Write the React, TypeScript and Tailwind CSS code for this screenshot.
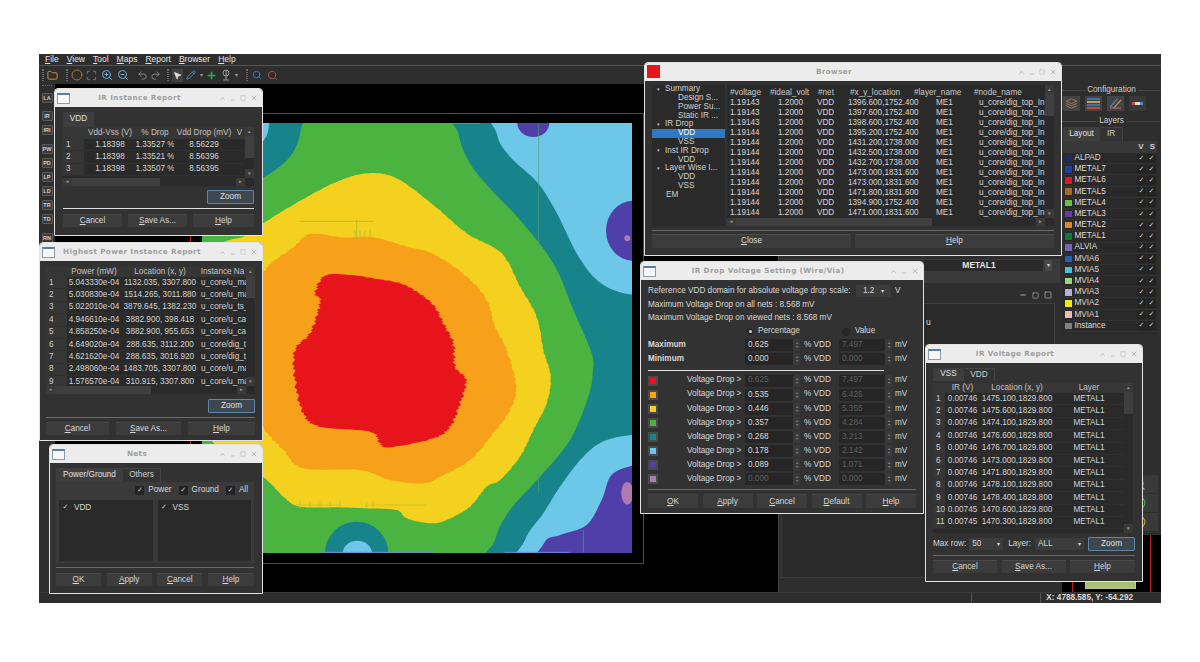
import {
  Folder,
  Circle,
  Scan,
  ZoomIn,
  ZoomOut,
  Undo2,
  Redo2,
  MousePointer2,
  Pencil,
  Plus,
  Search,
  ChevronUp,
  Minus,
  Square,
  X,
} from 'lucide-react';
import type { ReactNode } from 'react';

// rounded, optionally jagged outline through hand-picked points
function blob(pts: number[][], jitter = 0) {
  const out: string[] = [];
  const n = pts.length;
  let k = 0;
  for (let i = 0; i < n; i++) {
    const [p0, p1, p2, p3] = [pts[(i - 1 + n) % n], pts[i], pts[(i + 1) % n], pts[(i + 2) % n]];
    const steps = jitter ? 14 : 8;
    for (let s = 0; s < steps; s++) {
      const t = s / steps;
      const f = (a: number, b: number, c: number, d: number) =>
        0.5 * (2 * b + (c - a) * t + (2 * a - 5 * b + 4 * c - d) * t * t + (3 * b - a - 3 * c + d) * t * t * t);
      k++;
      const x = f(p0[0], p1[0], p2[0], p3[0]) + (jitter ? (((k * 7) % 5) - 2) * jitter : 0);
      const y = f(p0[1], p1[1], p2[1], p3[1]);
      out.push(`${x.toFixed(1)},${y.toFixed(1)}`);
    }
  }
  return out.join(' ');
}

const tealLeft = [[-60, -40], [300, -40], [302, 60], [270, 140], [188, 205], [60, 280], [-80, 300]];
const blueLeft = [[-60, -40], [212, -40], [208, 40], [188, 95], [100, 170], [-60, 180]];
const tealRight = [[768, -60], [775, 70], [810, 160], [870, 235], [960, 330], [1060, 460], [1120, 600], [1175, 730], [1178, 790], [1165, 860], [1110, 990], [1020, 1100], [930, 1200], [885, 1290], [870, 1420], [1500, 1500], [1500, -60]];
const blueTop = [[885, -60], [890, 70], [930, 140], [1010, 215], [1060, 290], [1100, 370], [1130, 430], [1180, 500], [1240, 540], [1320, 556], [1480, 560], [1480, -60]];
const blueBottom = [[1340, 970], [1220, 990], [1150, 1040], [1080, 1130], [1030, 1210], [975, 1290], [950, 1420], [1450, 1450], [1450, 970]];
const purpleBottom = [[1340, 1060], [1240, 1090], [1205, 1170], [1160, 1245], [1080, 1275], [1032, 1300], [1010, 1420], [1450, 1450], [1450, 1060]];
const yellow = [[500, 190], [590, 205], [700, 285], [800, 370], [905, 430], [960, 530], [1010, 620], [1030, 720], [1052, 800], [1040, 880], [1000, 960], [960, 1040], [900, 1110], [860, 1130], [810, 1190], [740, 1230], [690, 1240], [620, 1225], [590, 1200], [500, 1195], [420, 1192], [300, 1190], [250, 1160], [188, 1100], [40, 1000], [-60, 700], [40, 430], [135, 378], [190, 340], [270, 290], [400, 220]];
const orange = [[330, 372], [430, 382], [520, 382], [620, 410], [700, 432], [800, 500], [860, 570], [885, 650], [920, 720], [948, 830], [930, 900], [880, 970], [810, 1050], [720, 1100], [670, 1120], [570, 1110], [480, 1080], [310, 1075], [250, 1020], [188, 950], [100, 800], [100, 600], [188, 490], [215, 458], [280, 412]];
const red = [[375, 497], [450, 495], [520, 505], [600, 520], [650, 545], [700, 585], [730, 640], [760, 700], [765, 770], [798, 810], [780, 880], [750, 950], [700, 985], [570, 1012], [540, 1000], [510, 965], [360, 950], [310, 910], [285, 810], [285, 720], [330, 670], [355, 600], [360, 565], [345, 550]];

function HeatMap() {
  return (
    <svg viewBox="6 39 1290 1290" className="absolute left-[147px] top-[39px] h-[430px] w-[430px]">
      <rect x="6" y="39" width="1290" height="1290" fill="#4bb340" />
      <polygon points={blob(tealLeft)} fill="#17838a" />
      <polygon points={blob(blueLeft)} fill="#6cc7e8" />
      <polygon points={blob(tealRight)} fill="#17838a" />
      <polygon points={blob(blueTop)} fill="#6cc7e8" />
      <polygon points={blob(blueBottom)} fill="#6cc7e8" />
      <polygon points={blob(purpleBottom)} fill="#503fa8" />
      <ellipse cx="1300" cy="362" rx="82" ry="90" fill="#503fa8" />
      <ellipse cx="1000" cy="39" rx="48" ry="42" fill="#503fa8" />
      <circle cx="1282" cy="385" r="9" fill="#b07ab0" />
      <ellipse cx="1282" cy="1150" rx="18" ry="34" fill="#b07ab0" />
      <ellipse cx="470" cy="1330" rx="95" ry="95" fill="#17838a" />
      <ellipse cx="472" cy="1330" rx="44" ry="38" fill="#6cc7e8" />
      <polygon points={blob(yellow, 0.6)} fill="#f4d01f" />
      <polygon points={blob(orange, 1.5)} fill="#f7a01a" />
      <polygon points={blob(red, 2.6)} fill="#e8141b" />
      <path d="M1016 39V420M1016 1080V1150M1150 1260V1329" stroke="#4f9f72" strokeWidth="2" />
      <path d="M300 334H520M470 330V385M465 360V385M480 360V380M495 360V380M510 360V380" stroke="#7fae3a" strokeWidth="1.5" />
      <path d="M290 1185H420M495 1185H680M300 1170V1195M330 1175V1195M360 1175V1195M390 1175V1195M420 1170V1195M500 1175V1195M520 1175V1195" stroke="#b9bf2e" strokeWidth="2" />
      <path d="M710 40H840M360 1327H700M915 1327H1110" stroke="#6f8bd0" strokeWidth="3" />
    </svg>
  );
}

function WinControls({ noMax = false }: { noMax?: boolean }) {
  return (
    <div className="flex items-center gap-[4px] text-[#b0b0b0]">
      <ChevronUp size={7} strokeWidth={3} />
      <Minus size={6} strokeWidth={3} className="mt-[3px]" />
      {!noMax && <Square size={6} strokeWidth={2} />}
      <X size={8} strokeWidth={2.5} />
    </div>
  );
}

function Win({
  title,
  className,
  icon,
  noMax = false,
  children,
}: {
  title: string;
  className: string;
  icon?: ReactNode;
  noMax?: boolean;
  children: ReactNode;
}) {
  return (
    <div className={`absolute flex flex-col rounded-t-[4px] border border-[#e3e3e3] bg-[#323232] text-[#d6d6d6] ${className}`}>
      <div className="relative flex h-[18px] shrink-0 items-center justify-between rounded-t-[3px] bg-[#ececec] pl-[2px] pr-[4px]">
        {icon ?? <div className="h-[11px] w-[13px] border border-t-[2px] border-[#8d9aa8] border-t-[#5a7ca5] bg-[#f8f8f8]" />}
        <div
          className={`absolute left-0 text-center font-['DejaVu_Sans',sans-serif] text-[7.2px] font-bold tracking-[0.4px] text-[#a0a0a0] ${
            noMax ? 'right-[28px]' : 'right-[38px]'
          }`}
        >
          {title}
        </div>
        <WinControls noMax={noMax} />
      </div>
      {children}
    </div>
  );
}

function Btn({ letter, rest, className = '' }: { letter: string; rest: string; className?: string }) {
  return (
    <div className={`flex h-[13px] items-center justify-center rounded-[1px] border-t border-[#4a4a4a] bg-[#3c3c3c] text-[8.2px] text-[#d8d8d8] ${className}`}>
      <u>{letter}</u>
      {rest}
    </div>
  );
}

function ZoomBtn({ className = '' }: { className?: string }) {
  return (
    <div className={`flex h-[14px] w-[47px] items-center justify-center rounded-[1px] border border-[#5d86a8] bg-[#3d4750] text-[8.2px] text-[#e0e0e0] ${className}`}>
      Zoom
    </div>
  );
}

function Tab({ label, active = false, className = '' }: { label: string; active?: boolean; className?: string }) {
  return (
    <div
      className={`flex items-center justify-center rounded-t-[2px] text-[8.2px] ${
        active ? 'bg-[#3e3e3e] text-[#e0e0e0]' : 'border-t border-r border-[#444444] bg-[#333333] text-[#cfcfcf]'
      } ${className}`}
    >
      {label}
    </div>
  );
}

function VScroll() {
  return (
    <div className="flex w-[9px] shrink-0 flex-col items-center bg-[#2a2a2a] text-[#9a9a9a]">
      <div className="flex h-[9px] w-full items-center justify-center bg-[#3a3a3a] text-[5px] leading-none">▴</div>
      <div className="h-[22px] w-full bg-[#3f3f3f]" />
      <div className="flex-1" />
      <div className="flex h-[9px] w-full items-center justify-center bg-[#3a3a3a] text-[5px] leading-none">▾</div>
    </div>
  );
}

function HScroll({ thumb }: { thumb: string }) {
  return (
    <div className="flex h-[8px] shrink-0 items-center bg-[#2a2a2a] text-[#9a9a9a]">
      <div className="flex h-full w-[9px] items-center justify-center bg-[#3a3a3a] text-[5px]">◂</div>
      <div className={`h-full bg-[#3f3f3f] ${thumb}`} />
      <div className="flex-1" />
      <div className="flex h-full w-[9px] items-center justify-center bg-[#3a3a3a] text-[5px]">▸</div>
      <div className="w-[9px]" />
    </div>
  );
}

function ReportTable({
  cols,
  head,
  rows,
  rowH,
  headH,
  className,
  scroll = true,
  leftLast = false,
}: {
  cols: string;
  head: string[];
  rows: string[][];
  rowH: string;
  headH: string;
  className: string;
  scroll?: boolean;
  leftLast?: boolean;
}) {
  return (
    <div className={`flex flex-col bg-[#2a2a2a] ${className}`}>
      <div className="flex min-h-0 flex-1">
        <div className="min-w-0 flex-1 overflow-hidden text-[8.2px]">
          <div className={`grid ${cols} ${headH} bg-[#363636]`}>
            <div />
            {head.map((h) => (
              <div key={h} className="flex items-center justify-center overflow-hidden whitespace-nowrap text-[#c4c4c4]">
                {h}
              </div>
            ))}
          </div>
          {rows.map((r) => (
            <div key={r[0]} className={`grid ${cols} ${rowH} border-b border-[#303030]`}>
              <div className="flex items-center overflow-hidden bg-[#363636] pl-[3px] text-[#cfcfcf]">{r[0]}</div>
              {r.slice(1).map((c, i) => (
                <div
                  key={i}
                  className={`flex items-center overflow-hidden whitespace-nowrap text-[#d4d4d4] ${
                    leftLast && i === r.length - 2 ? 'justify-start pl-[2px]' : 'justify-center'
                  }`}
                >
                  {c}
                </div>
              ))}
            </div>
          ))}
        </div>
        <VScroll />
      </div>
      {scroll && <HScroll thumb="w-[46%]" />}
    </div>
  );
}

const instanceRows = [
  ['1', '1.18398', '1.33527 %', '8.56229', ''],
  ['2', '1.18398', '1.33521 %', '8.56396', ''],
  ['3', '1.18398', '1.33507 %', '8.56395', ''],
];

const powerRows = [
  ['1', '5.043330e-04', '1132.035, 3307.800', 'u_core/u_ma'],
  ['2', '5.030830e-04', '1514.265, 3011.880', 'u_core/u_ma'],
  ['3', '5.022010e-04', '3879.645, 1382.230', 'u_core/u_ts_'],
  ['4', '4.946610e-04', '3882.900, 398.418', 'u_core/u_ca'],
  ['5', '4.858250e-04', '3882.900, 955.653', 'u_core/u_ca'],
  ['6', '4.649020e-04', '288.635, 3112.200', 'u_core/dig_t'],
  ['7', '4.621620e-04', '288.635, 3016.920', 'u_core/dig_t'],
  ['8', '2.498060e-04', '1483.705, 3307.800', 'u_core/u_ma'],
  ['9', '1.576570e-04', '310.915, 3307.800', 'u_core/u_ma'],
];

const voltageRows = [
  ['1', '0.00746', '1475.100,1829.800', 'METAL1'],
  ['2', '0.00746', '1475.600,1829.800', 'METAL1'],
  ['3', '0.00746', '1474.100,1829.800', 'METAL1'],
  ['4', '0.00746', '1476.600,1829.800', 'METAL1'],
  ['5', '0.00746', '1476.700,1829.800', 'METAL1'],
  ['6', '0.00746', '1473.000,1829.800', 'METAL1'],
  ['7', '0.00746', '1471.800,1829.800', 'METAL1'],
  ['8', '0.00746', '1478.100,1829.800', 'METAL1'],
  ['9', '0.00746', '1478.400,1829.800', 'METAL1'],
  ['10', '0.00745', '1470.600,1829.800', 'METAL1'],
  ['11', '0.00745', '1470.300,1829.800', 'METAL1'],
];

const browserRows = [
  ['1.19143', '1396.600,1752.400'],
  ['1.19143', '1397.600,1752.400'],
  ['1.19143', '1398.600,1752.400'],
  ['1.19144', '1395.200,1752.400'],
  ['1.19144', '1431.200,1738.000'],
  ['1.19144', '1432.500,1738.000'],
  ['1.19144', '1432.700,1738.000'],
  ['1.19144', '1473.000,1831.600'],
  ['1.19144', '1473.000,1831.600'],
  ['1.19144', '1471.800,1831.600'],
  ['1.19144', '1394.900,1752.400'],
  ['1.19144', '1471.000,1831.600'],
];

const treeItems: [string, number, boolean?][] = [
  ['Summary', 0],
  ['Design S...', 1],
  ['Power Su...', 1],
  ['Static IR ...', 1],
  ['IR Drop', 0],
  ['VDD', 1, true],
  ['VSS', 1],
  ['Inst IR Drop', 0],
  ['VDD', 1],
  ['Layer Wise I...', 0],
  ['VDD', 1],
  ['VSS', 1],
  ['EM', 2],
];

const dropRows = [
  ['bg-[#e8141b]', '0.625', '7.497'],
  ['bg-[#f7a01a]', '0.535', '6.426'],
  ['bg-[#f4d01f]', '0.446', '5.355'],
  ['bg-[#4bb340]', '0.357', '4.284'],
  ['bg-[#17838a]', '0.268', '3.213'],
  ['bg-[#6cc7e8]', '0.178', '2.142'],
  ['bg-[#503fa8]', '0.089', '1.071'],
  ['bg-[#b07ab0]', '0.000', '0.000'],
];

const layers = [
  ['ALPAD', 'bg-[#1d2a6b]'],
  ['METAL7', 'bg-[#1c3f9a]'],
  ['METAL6', 'bg-[#e8141b]'],
  ['METAL5', 'bg-[#a7692a]'],
  ['METAL4', 'bg-[#6cc23a]'],
  ['METAL3', 'bg-[#6a3aa0]'],
  ['METAL2', 'bg-[#d68a2e]'],
  ['METAL1', 'bg-[#0e7a35]'],
  ['ALVIA', 'bg-[#7b65b5]'],
  ['MVIA6', 'bg-[#2a5fb0]'],
  ['MVIA5', 'bg-[#45c0dc]'],
  ['MVIA4', 'bg-[#9bd67d]'],
  ['MVIA3', 'bg-[#b8aed8]'],
  ['MVIA2', 'bg-[#f4e61f]'],
  ['MVIA1', 'bg-[#f4b8b8]'],
  ['Instance', 'bg-[#808080]'],
];

function Spin({ value, off = false, w }: { value: string; off?: boolean; w: string }) {
  return (
    <div className={`flex h-[12px] items-center bg-[#262626] pl-[3px] text-[8.2px] ${w} ${off ? 'text-[#5f5f5f]' : 'text-[#dcdcdc]'}`}>
      <span className="flex-1">{value}</span>
      <span className="flex h-full w-[7px] flex-col items-center justify-center bg-[#3a3a3a] text-[4px] leading-[4px] text-[#8a8a8a]">
        <span>▴</span>
        <span>▾</span>
      </span>
    </div>
  );
}

function Grip({ className = '' }: { className?: string }) {
  return <div className={`h-[12px] w-[2px] border-x border-dotted border-[#6a6a6a] ${className}`} />;
}

function Check({ className = '' }: { className?: string }) {
  return (
    <span className={`flex h-[9px] w-[9px] items-center justify-center bg-[#232323] font-['DejaVu_Sans',sans-serif] text-[7px] leading-none text-[#cfcfcf] ${className}`}>
      ✓
    </span>
  );
}

const strip = [
  ['LA', 'mt-[6px]'],
  ['IR', 'mt-[8px]'],
  ['IRI', 'mt-[4px]'],
  ['PW', 'mt-[9px]'],
  ['PD', 'mt-[4px]'],
  ['LP', 'mt-[4px]'],
  ['LD', 'mt-[4px]'],
  ['TR', 'mt-[4px]'],
  ['TD', 'mt-[4px]'],
  ['RN', 'mt-[9px]'],
];

export default function App() {
  return (
    <div className="relative h-[662px] w-[1200px] overflow-hidden bg-white font-['Liberation_Sans',Arial,sans-serif]">
      {/* main application window */}
      <div className="ml-[39px] flex h-[549px] w-[1122px] translate-y-[54px] flex-col bg-[#2e2e2e] text-[#d8d8d8]">
        <div className="flex h-[12px] shrink-0 items-center gap-[8px] border-b border-[#555555] pl-[6px] text-[8.5px] text-[#e4e4e4]">
          {['File', 'View', 'Tool', 'Maps', 'Report', 'Browser', 'Help'].map((m) => (
            <span key={m}>
              <u>{m[0]}</u>
              {m.slice(1)}
            </span>
          ))}
        </div>
        <div className="flex h-[18px] shrink-0 items-center pl-[3px]">
          <Grip />
          <Folder size={11} className="ml-[3px] text-[#d99a3a]" />
          <Grip className="ml-[8px]" />
          <Circle size={12} className="ml-[3px] text-[#a8762c]" />
          <Scan size={11} className="ml-[3px] text-[#5c9fc9]" />
          <ZoomIn size={12} className="ml-[4px] text-[#6fb0d8]" />
          <ZoomOut size={12} className="ml-[4px] text-[#6fb0d8]" />
          <Undo2 size={11} className="ml-[8px] text-[#8a8a8a]" />
          <Redo2 size={11} className="ml-[2px] text-[#8a8a8a]" />
          <Grip className="ml-[6px]" />
          <div className="ml-[3px] flex h-[13px] w-[11px] items-center justify-center bg-[#404040]">
            <MousePointer2 size={9} className="fill-[#dddddd] text-[#dddddd]" />
          </div>
          <Pencil size={10} className="ml-[3px] text-[#4a9ad4]" />
          <span className="ml-[4px] text-[6px] text-[#9a9a9a]">▾</span>
          <Plus size={11} strokeWidth={3.5} className="ml-[3px] text-[#2ba84a]" />
          <svg viewBox="0 0 12 12" className="ml-[3px] h-[12px] w-[12px] text-[#9a9a9a]" fill="none" stroke="currentColor">
            <circle cx="6" cy="4" r="3" />
            <path d="M6 1V11M3 11H9" />
          </svg>
          <span className="ml-[3px] text-[6px] text-[#9a9a9a]">▾</span>
          <Grip className="ml-[8px]" />
          <Search size={10} className="ml-[4px] text-[#3f86c4]" />
          <Search size={11} className="ml-[5px] text-[#c24a4a]" />
        </div>

        <div className="flex min-h-0 flex-1">
          <div className="flex w-[16px] shrink-0 flex-col items-center pt-[1px]">
            <div className="h-[2px] w-[10px] border-t border-dotted border-[#6a6a6a]" />
            {strip.map(([l, m]) => (
              <div key={l} className={`flex h-[10px] w-[11px] items-center justify-center rounded-[1px] border border-[#5a5a5a] bg-[#3a3a3a] text-[5.5px] font-bold text-[#cfcfcf] ${m}`}>
                {l}
              </div>
            ))}
          </div>

          <div className="relative w-[723px] shrink-0 overflow-hidden bg-black">
            {/* die outline */}
            <svg viewBox="0 0 723 508" className="absolute inset-0 h-[508px] w-[723px]" fill="none">
              <rect x="135.5" y="29.5" width="453" height="450" stroke="#c8141c" />
            </svg>
            <HeatMap />
          </div>

          {/* middle dock */}
          <div className="flex w-[282px] shrink-0 flex-col border-l border-[#444444]">
            <div className="h-[175px] shrink-0" />
            <div className="flex h-[24px] shrink-0 items-start justify-end gap-[2px] bg-[#3a3a3a] pr-[8px] pt-[1px]">
              <div className="flex h-[11px] flex-1 items-center justify-center bg-[#2a2a2a] pl-[136px] text-[8.5px] font-bold text-[#e4e4e4]">METAL1</div>
              <div className="flex h-[11px] w-[7px] items-center justify-center bg-[#4a4a4a] text-[6px]">▾</div>
            </div>
            <div className="flex h-[20px] shrink-0 items-center justify-end gap-[5px] pr-[8px] pt-[4px] text-[#bdbdbd]">
              <Minus size={8} strokeWidth={2.5} />
              <Square size={7} />
              <Square size={8} />
            </div>
            <div className="mb-[14px] ml-[2px] mr-[5px] flex-1 border border-[#3e3e3e] bg-[#2a2a2a] pl-[144px] pt-[12px] text-[8.5px] text-[#d8d8d8]">
              u
            </div>
          </div>

          {/* right dock */}
          <div className="flex min-w-0 flex-1 flex-col pl-[2px]">
            <div className="relative flex h-[12px] shrink-0 items-center justify-center text-[8.2px] text-[#cfcfcf]">
              <div className="absolute inset-x-0 top-[6px] h-px bg-[#444444]" />
              <span className="relative bg-[#2e2e2e] px-[2px]">Configuration</span>
            </div>
            <div className="flex h-[15px] shrink-0 gap-[5px] pl-[1px]">
              <div className="flex w-[17px] items-center justify-center bg-[#444444]">
                <svg viewBox="0 0 14 12" className="h-[11px] w-[13px]" fill="none" stroke="#b0706a">
                  <path d="M7 1L13 3.5L7 6L1 3.5ZM1 6L7 8.5L13 6M1 8.5L7 11L13 8.5" />
                </svg>
              </div>
              <div className="flex w-[17px] flex-col justify-center gap-[1px] bg-[#444444] px-[2px]">
                <div className="h-[2px] bg-[#3f6fb0]" />
                <div className="h-[2px] bg-[#d0a030]" />
                <div className="h-[2px] bg-[#3f6fb0]" />
                <div className="h-[2px] bg-[#c04a3a]" />
              </div>
              <div className="flex w-[17px] items-center justify-center bg-[#444444]">
                <svg viewBox="0 0 14 12" className="h-[11px] w-[13px]" fill="none" strokeWidth="1.3">
                  <path d="M1 10L9 1" stroke="#4a90c4" />
                  <path d="M5 11L13 2" stroke="#c9a14a" />
                  <path d="M1 11H13" stroke="#b05a6a" />
                </svg>
              </div>
              <div className="flex w-[17px] items-center justify-center bg-[#3a3a3a]">
                <div className="h-[3px] w-[3px] bg-[#c0504a]" />
                <div className="h-[3px] w-[5px] bg-[#dddddd]" />
                <div className="h-[3px] w-[3px] bg-[#5a8ac0]" />
              </div>
            </div>
            <div className="relative mt-[4px] flex h-[12px] shrink-0 items-center justify-center text-[8.2px] text-[#cfcfcf]">
              <div className="absolute inset-x-0 top-[6px] h-px bg-[#444444]" />
              <span className="relative bg-[#2e2e2e] px-[2px]">Layers</span>
            </div>
            <div className="flex h-[14px] shrink-0 pl-[1px]">
              <Tab label="Layout" active className="w-[37px]" />
              <Tab label="IR" className="w-[23px]" />
            </div>
            <div className="ml-[1px] mr-[4px] shrink-0 bg-[#2a2a2a] pb-[2px] text-[8.2px]">
              <div className="flex h-[12px] items-center justify-end gap-[6px] bg-[#383838] pr-[2px] text-[8px] font-bold text-[#cfcfcf]">
                <span>V</span>
                <span>S</span>
              </div>
              {layers.map(([name, swatch]) => (
                <div key={name} className="flex h-[11.2px] items-center border-b border-[#333333] pl-[2px] pr-[1px]">
                  <div className={`h-[6.5px] w-[6.5px] ${swatch}`} />
                  <span className="ml-[3px] flex-1 text-[#dcdcdc]">{name}</span>
                  <Check className="mr-[1px]" />
                  <Check />
                </div>
              ))}
            </div>
            <div className="min-h-0 flex-1" />
            <div className="flex shrink-0 flex-col items-end gap-[1px] pr-[3px]">
              <div className="flex h-[18px] w-[38px] items-center justify-center bg-[#3a3a3a]">
                <Search size={14} className="text-[#6fa8d8]" />
              </div>
              <div className="flex h-[18px] w-[38px] items-center justify-center bg-[#3a3a3a]">
                <Circle size={14} className="text-[#3fb04a]" />
              </div>
              <div className="flex h-[18px] w-[38px] items-center justify-center bg-[#3a3a3a]">
                <Circle size={14} className="text-[#d09a2a]" />
              </div>
            </div>
            <svg viewBox="0 0 99 57" className="mt-[4px] h-[57px] w-[99px] shrink-0 bg-black">
              <path d="M10.5 0V57M88.5 0V57" stroke="#c01a22" />
              <rect x="23.5" y="46.5" width="50" height="7" fill="#a8c070" stroke="#c8c0a0" />
            </svg>
          </div>
        </div>

        <div className="flex h-[11px] shrink-0 items-center justify-end border-t border-[#3a3a3a] pr-[28px] text-[8.2px] font-bold text-[#dcdcdc]">
          <div className="mr-[68px] h-full w-px bg-[#555555]" />
          <div className="mr-[5px] h-full w-px bg-[#555555]" />
          X: 4788.585, Y: -54.292
        </div>
      </div>

      {/* IR Instance Report */}
      <Win title="IR Instance Report" className="left-[54px] top-[88px] h-[148px] w-[209px]">
        <div className="flex flex-1 flex-col px-[8px] pt-[5px]">
          <Tab label="VDD" active className="h-[15px] w-[31px]" />
          <ReportTable
            className="h-[59px] w-[191px]"
            cols="grid-cols-[21px_52px_38px_60px_11px]"
            headH="h-[12px]"
            rowH="h-[12.4px]"
            head={['Vdd-Vss (V)', '% Drop', 'Vdd Drop (mV)', 'V']}
            rows={instanceRows}
          />
          <div className="mt-[4px] flex justify-end">
            <ZoomBtn />
          </div>
          <div className="mt-[4px] h-px bg-[#e0e0e0]" />
          <div className="mt-[5px] flex justify-between">
            <Btn letter="C" rest="ancel" className="w-[59px]" />
            <Btn letter="S" rest="ave As..." className="w-[59px]" />
            <Btn letter="H" rest="elp" className="w-[61px]" />
          </div>
        </div>
      </Win>

      {/* Highest Power Instance Report */}
      <Win title="Highest Power Instance Report" className="left-[39px] top-[242px] h-[199px] w-[224px]">
        <div className="flex flex-1 flex-col pl-[6px] pr-[7px] pt-[6px]">
          <ReportTable
            className="h-[127px] w-[209px]"
            cols="grid-cols-[21px_54px_78px_47px]"
            headH="h-[10px]"
            rowH="h-[12.4px]"
            head={['Power (mW)', 'Location (x, y)', 'Instance Na']}
            rows={powerRows}
            leftLast
          />
          <div className="mt-[5px] flex justify-end">
            <ZoomBtn />
          </div>
          <div className="mt-[4px] h-px bg-[#6a6a6a]" />
          <div className="mt-[4px] flex justify-between">
            <Btn letter="C" rest="ancel" className="w-[63px]" />
            <Btn letter="S" rest="ave As..." className="w-[65px]" />
            <Btn letter="H" rest="elp" className="w-[67px]" />
          </div>
        </div>
      </Win>

      {/* Nets */}
      <Win title="Nets" className="left-[49px] top-[444px] h-[150px] w-[214px]">
        <div className="flex flex-1 flex-col pl-[6px] pr-[8px] pt-[5px]">
          <div className="flex h-[14px] shrink-0">
            <Tab label="Power/Ground" active className="w-[67px]" />
            <Tab label="Others" className="w-[38px]" />
          </div>
          <div className="flex h-[81px] flex-col bg-[#3a3a3a] px-[3px] pt-[2px]">
            <div className="flex h-[13px] shrink-0 items-center justify-end gap-[4px] pr-[3px] text-[8.2px]">
              <Check />
              <span>Power</span>
              <Check className="ml-[3px]" />
              <span>Ground</span>
              <Check className="ml-[3px]" />
              <span>All</span>
            </div>
            <div className="mt-[3px] flex h-[61px] gap-[5px] text-[8.2px]">
              <div className="flex h-full flex-1 items-start gap-[4px] bg-[#2a2a2a] pl-[2px] pt-[2px]">
                <Check className="mt-[1px] bg-transparent" />
                <span>VDD</span>
              </div>
              <div className="flex h-full flex-1 items-start gap-[4px] bg-[#2a2a2a] pl-[2px] pt-[2px]">
                <Check className="mt-[1px] bg-transparent" />
                <span>VSS</span>
              </div>
            </div>
          </div>
          <div className="mt-[4px] h-px bg-[#6a6a6a]" />
          <div className="mt-[5px] flex justify-between">
            <Btn letter="O" rest="K" className="w-[45px]" />
            <Btn letter="A" rest="pply" className="w-[45px]" />
            <Btn letter="C" rest="ancel" className="w-[45px]" />
            <Btn letter="H" rest="elp" className="w-[46px]" />
          </div>
        </div>
      </Win>

      {/* Browser */}
      <Win
        title="Browser"
        className="left-[644px] top-[62px] h-[194px] w-[418px]"
        icon={<div className="mt-[-2px] h-[13px] w-[13px] bg-[#e8141b]" />}
      >
        <div className="flex flex-1 flex-col px-[7px] pt-[4px]">
          <div className="flex h-[141px] shrink-0 gap-[2px]">
            <div className="w-[73px] shrink-0 overflow-hidden bg-[#2a2a2a] text-[8.2px]">
              {treeItems.map(([label, level, selected], i) => (
                <div
                  key={i}
                  className={`flex h-[8.8px] items-center whitespace-nowrap ${selected ? 'bg-[#2f78c4] text-white' : 'text-[#cfcfcf]'} ${
                    level === 0 ? 'pl-[5px]' : level === 1 ? 'pl-[26px]' : 'pl-[14px]'
                  }`}
                >
                  {level === 0 && <span className="mr-[5px] text-[5px] text-[#bdbdbd]">▾</span>}
                  {label}
                </div>
              ))}
            </div>
            <div className="flex min-w-0 flex-1 flex-col bg-[#2a2a2a]">
              <div className="flex h-[133px] min-h-0">
                <div className="min-w-0 flex-1 overflow-hidden pt-[2px] text-[8.2px] text-[#d6d6d6]">
                  <div className="grid h-[10px] grid-cols-[40px_46px_32px_66px_59px_1fr] items-center whitespace-nowrap text-[#c8c8c8]">
                    <span className="pl-[3px]">#voltage</span>
                    <span className="pl-[3px]">#ideal_volt</span>
                    <span className="pl-[5px]">#net</span>
                    <span className="pl-[5px]">#x_y_location</span>
                    <span className="pl-[3px]">#layer_name</span>
                    <span className="pl-[4px]">#node_name</span>
                  </div>
                  {browserRows.map(([v, loc], i) => (
                    <div key={i} className="grid h-[10px] grid-cols-[40px_46px_32px_66px_59px_1fr] items-center whitespace-nowrap">
                      <span className="pl-[3px]">{v}</span>
                      <span className="pl-[11px]">1.2000</span>
                      <span className="pl-[4px]">VDD</span>
                      <span className="pl-[3px]">{loc}</span>
                      <span className="pl-[25px]">ME1</span>
                      <span className="overflow-hidden pl-[9px]">u_core/dig_top_In</span>
                    </div>
                  ))}
                </div>
                <VScroll />
              </div>
              <HScroll thumb="w-[60%]" />
            </div>
          </div>
          <div className="mt-[4px] h-px bg-[#6a6a6a]" />
          <div className="mt-[3px] flex gap-[4px]">
            <Btn letter="C" rest="lose" className="h-[14px] flex-1" />
            <Btn letter="H" rest="elp" className="h-[14px] flex-1" />
          </div>
        </div>
      </Win>

      {/* IR Drop Voltage Setting */}
      <Win title="IR Drop Voltage Setting (Wire/Via)" noMax className="left-[640px] top-[261px] h-[253px] w-[284px]">
        <div className="flex flex-1 flex-col px-[7px] pt-[4px] text-[8.2px] text-[#d8d8d8]">
          <div className="flex h-[14px] items-center">
            <span className="w-[208px] whitespace-nowrap">Reference VDD domain for absolute voltage drop scale:</span>
            <div className="flex h-[12px] w-[35px] items-center justify-between bg-[#3c3c3c] px-[7px]">
              <span>1.2</span>
              <span className="text-[6px]">▾</span>
            </div>
            <span className="ml-[4px]">V</span>
          </div>
          <div className="flex h-[14px] items-center">Maximum Voltage Drop on all nets : 8.568 mV</div>
          <div className="flex h-[13px] items-center">Maximum Voltage Drop on viewed nets : 8.568 mV</div>
          <div className="flex h-[13px] items-center">
            <span className="ml-[98px] flex h-[8px] w-[8px] items-center justify-center rounded-full bg-[#2a2a2a]">
              <span className="h-[3px] w-[3px] rounded-full bg-[#cfcfcf]" />
            </span>
            <span className="ml-[4px]">Percentage</span>
            <span className="ml-[42px] h-[8px] w-[8px] rounded-full bg-[#262626]" />
            <span className="ml-[5px]">Value</span>
          </div>
          {[
            ['Maximum', '0.625', '7.497'],
            ['Minimum', '0.000', '0.000'],
          ].map(([label, a, b]) => (
            <div key={label} className="flex h-[14px] items-center">
              <span className="w-[97px] font-bold">{label}</span>
              <Spin value={a} w="w-[55px]" />
              <span className="ml-[4px] w-[35px]">% VDD</span>
              <Spin value={b} off w="w-[53px]" />
              <span className="ml-[3px]">mV</span>
            </div>
          ))}
          <div className="mr-[32px] mt-[4px] h-px bg-[#e0e0e0]" />
          <div className="mt-[2.5px] flex flex-col">
            {dropRows.map(([swatch, a, b], i) => (
              <div key={swatch} className="flex h-[14.1px] items-center">
                <span className="flex h-[10px] w-[10px] items-center justify-center bg-[#4a4a4a]">
                  <span className={`h-[6px] w-[6px] ${swatch}`} />
                </span>
                <span className="ml-[29px] w-[58px] whitespace-nowrap">Voltage Drop &gt;</span>
                <Spin value={a} off={i === 0 || i === 7} w="w-[55px]" />
                <span className="ml-[4px] w-[35px]">% VDD</span>
                <Spin value={b} off w="w-[53px]" />
                <span className="ml-[3px]">mV</span>
              </div>
            ))}
          </div>
          <div className="mt-[3px] h-px bg-[#6a6a6a]" />
          <div className="mt-[4px] flex justify-between">
            <Btn letter="O" rest="K" className="h-[14px] w-[50px]" />
            <Btn letter="A" rest="pply" className="h-[14px] w-[50px]" />
            <Btn letter="C" rest="ancel" className="h-[14px] w-[50px]" />
            <Btn letter="D" rest="efault" className="h-[14px] w-[50px]" />
            <Btn letter="H" rest="elp" className="h-[14px] w-[50px]" />
          </div>
        </div>
      </Win>

      {/* IR Voltage Report */}
      <Win title="IR Voltage Report" className="left-[925px] top-[344px] h-[238px] w-[218px]">
        <div className="flex flex-1 flex-col px-[7px] pt-[5px] text-[8.2px]">
          <div className="flex h-[13px] shrink-0">
            <Tab label="VSS" active className="w-[31px]" />
            <Tab label="VDD" className="w-[31px]" />
          </div>
          <ReportTable
            className="mt-[2px] h-[150px] w-[200px]"
            cols="grid-cols-[12px_35px_74px_70px]"
            headH="h-[10px]"
            rowH="h-[12.4px]"
            head={['IR (V)', 'Location (x, y)', 'Layer']}
            rows={voltageRows}
            scroll={false}
          />
          <div className="mt-[4px] flex h-[14px] items-center">
            <span>Max row:</span>
            <div className="ml-[3px] flex h-[12px] w-[34px] items-center justify-between bg-[#3c3c3c] px-[3px]">
              <span>50</span>
              <span className="text-[6px]">▾</span>
            </div>
            <span className="ml-[5px]">Layer:</span>
            <div className="ml-[4px] flex h-[12px] w-[49px] items-center justify-between bg-[#3c3c3c] px-[3px]">
              <span>ALL</span>
              <span className="text-[6px]">▾</span>
            </div>
            <ZoomBtn className="ml-auto" />
          </div>
          <div className="mt-[4px] h-px bg-[#6a6a6a]" />
          <div className="mt-[4px] flex justify-between">
            <Btn letter="C" rest="ancel" className="w-[64px]" />
            <Btn letter="S" rest="ave As..." className="w-[64px]" />
            <Btn letter="H" rest="elp" className="w-[65px]" />
          </div>
        </div>
      </Win>
    </div>
  );
}
